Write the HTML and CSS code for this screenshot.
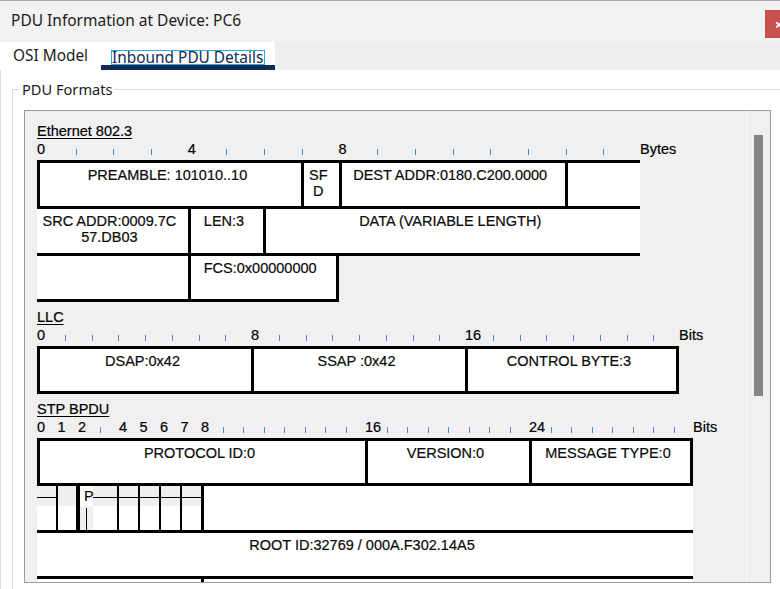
FILE: index.html
```html
<!DOCTYPE html>
<html>
<head>
<meta charset="utf-8">
<title>PDU Information at Device: PC6</title>
<link rel="stylesheet" href="styles.css">
</head>
<body>
<div class="dialog">
  <div class="titlebar">
    <div class="title">PDU Information at Device: PC6</div>
    <div class="close">×</div>
  </div>
  <div class="tabbar">
    <div class="tabs">
      <div class="tab">OSI Model</div>
      <div class="tab active"><span class="focus">Inbound PDU Details</span></div>
    </div>
  </div>
  <div class="content">
    <fieldset class="group">
      <legend>PDU Formats</legend>
      <div class="scroll">
        <div class="canvas">

          <section class="pdu eth">
            <div class="pdu-title">Ethernet 802.3</div>
            <div class="ruler">
              <span class="u"><b>0</b></span><span class="u"><i></i></span><span class="u"><i></i></span><span class="u"><i></i></span>
              <span class="u"><b>4</b></span><span class="u"><i></i></span><span class="u"><i></i></span><span class="u"><i></i></span>
              <span class="u"><b>8</b></span><span class="u"><i></i></span><span class="u"><i></i></span><span class="u"><i></i></span>
              <span class="u"><i></i></span><span class="u"><i></i></span><span class="u"><i></i></span><span class="u"><i></i></span>
              <span class="unit">Bytes</span>
            </div>
            <div class="row w16 top h43">
              <div class="c s7 bl">PREAMBLE: 101010..10</div>
              <div class="c s1 bl">SF<br>D</div>
              <div class="c s6 bl">DEST ADDR:0180.C200.0000</div>
              <div class="c s2 bl"></div>
            </div>
            <div class="row w16 top bottom h44">
              <div class="c s4">SRC ADDR:0009.7C<br>57.DB03</div>
              <div class="c s2 bl">LEN:3</div>
              <div class="c s10 bl">DATA (VARIABLE LENGTH)</div>
            </div>
            <div class="row w8 bottom h43">
              <div class="c s4"></div>
              <div class="c s4 bl br">FCS:0x00000000</div>
            </div>
          </section>

          <section class="pdu llc">
            <div class="pdu-title">LLC</div>
            <div class="ruler">
              <span class="u"><b>0</b></span><span class="u"><i></i></span><span class="u"><i></i></span><span class="u"><i></i></span><span class="u"><i></i></span><span class="u"><i></i></span><span class="u"><i></i></span><span class="u"><i></i></span>
              <span class="u"><b>8</b></span><span class="u"><i></i></span><span class="u"><i></i></span><span class="u"><i></i></span><span class="u"><i></i></span><span class="u"><i></i></span><span class="u"><i></i></span><span class="u"><i></i></span>
              <span class="u"><b>16</b></span><span class="u"><i></i></span><span class="u"><i></i></span><span class="u"><i></i></span><span class="u"><i></i></span><span class="u"><i></i></span><span class="u"><i></i></span><span class="u"><i></i></span>
              <span class="unit">Bits</span>
            </div>
            <div class="row w24 top bottom h42">
              <div class="c s8 bl">DSAP:0x42</div>
              <div class="c s8 bl">SSAP :0x42</div>
              <div class="c s8 bl br">CONTROL BYTE:3</div>
            </div>
          </section>

          <section class="pdu stp">
            <div class="pdu-title">STP BPDU</div>
            <div class="ruler">
              <span class="u"><b>0</b></span><span class="u"><b>1</b></span><span class="u"><b>2</b></span><span class="u"><i></i></span>
              <span class="u"><b>4</b></span><span class="u"><b>5</b></span><span class="u"><b>6</b></span><span class="u"><b>7</b></span>
              <span class="u"><b>8</b></span><span class="u"><i></i></span><span class="u"><i></i></span><span class="u"><i></i></span><span class="u"><i></i></span><span class="u"><i></i></span><span class="u"><i></i></span><span class="u"><i></i></span>
              <span class="u"><b>16</b></span><span class="u"><i></i></span><span class="u"><i></i></span><span class="u"><i></i></span><span class="u"><i></i></span><span class="u"><i></i></span><span class="u"><i></i></span><span class="u"><i></i></span>
              <span class="u"><b>24</b></span><span class="u"><i></i></span><span class="u"><i></i></span><span class="u"><i></i></span><span class="u"><i></i></span><span class="u"><i></i></span><span class="u"><i></i></span><span class="u"><i></i></span>
              <span class="unit">Bits</span>
            </div>
            <div class="row w32 top h42">
              <div class="c s16 bl">PROTOCOL ID:0</div>
              <div class="c s8 bl">VERSION:0</div>
              <div class="c s8 bl br">MESSAGE TYPE:0</div>
            </div>
            <div class="row w32 top h44">
              <div class="flags">
                <span class="fl-h fl-h1"></span>
                <span class="fl-h fl-h2"></span>
                <span class="fl-v fl-v1"></span>
                <span class="fl-v fl-v2"></span>
                <span class="fl-pcol"></span>
                <span class="fl-p">P</span>
                <span class="fl-pline"></span>
                <span class="fl-v fl-v4"></span>
                <span class="fl-v fl-v5"></span>
                <span class="fl-v fl-v6"></span>
                <span class="fl-v fl-v7"></span>
              </div>
              <div class="c s24 bl"></div>
            </div>
            <div class="row w32 top bottom h43">
              <div class="c s32">ROOT ID:32769 / 000A.F302.14A5</div>
            </div>
            <div class="row w32 h43">
              <div class="c s8"></div>
              <div class="c s24 bl"></div>
            </div>
          </section>

        </div>
        <div class="vscroll"><div class="thumb"></div></div>
      </div>
    </fieldset>
  </div>
</div>
</body>
</html>
```
FILE: styles.css
```css
* { box-sizing: border-box; }
html, body { margin: 0; padding: 0; }
body {
  width: 780px;
  height: 589px;
  overflow: hidden;
  background: #ffffff;
  font-family: "Noto Sans", "Open Sans", sans-serif;
  color: #1b1b1b;
}
.dialog { height: 589px; display: flex; flex-direction: column; }

/* title bar */
.titlebar {
  height: 42px;
  flex: none;
  background: #f2f2f2;
  border-top: 1px solid #a9a9a9;
  display: flex;
  justify-content: space-between;
  align-items: flex-start;
}
.title { font-size: 15.5px; line-height: 20px; padding: 9px 0 0 11px; white-space: nowrap; }
.close {
  flex: none;
  width: 28px;
  height: 28px;
  margin: 9px -13px 0 0;
  background: #c75050;
  color: #ffffff;
  font-size: 15px;
  font-weight: bold;
  line-height: 28px;
  text-align: center;
}

/* tabs */
.tabbar { height: 28px; flex: none; background: #eeeeee; display: flex; }
.tabs { display: flex; background: #ffffff; flex: none; width: 275px; }
.tab {
  flex: none;
  white-space: nowrap;
  font-size: 15.4px;
  line-height: 20px;
  padding: 4px 13px 0 13px;
  color: #1b1b1b;
}
.tab.active {
  flex: 1;
  padding: 6px 0 0 10px;
  border-bottom: 5px solid #0d2a52;
  color: #0d2a52;
}
.focus { display: inline-block; height: 15px; line-height: 13px; border: 1px solid #2aa8e0; padding: 0 1px 0 0; }

/* group box */
.content { flex: 1; overflow: hidden; box-shadow: inset 1px 0 #dddddd; }
.group {
  margin: 10px 0 0 12px;
  width: 800px;
  height: 560px;
  border: 1px solid #dcdcdc;
  padding: 12px 0 0 11px;
  min-width: 0;
}
.group legend {
  font-size: 14.6px;
  line-height: 18px;
  margin-left: -4px;
  padding: 0 2px;
  color: #1b1b1b;
}

/* scroll panel */
.scroll {
  width: 747px;
  height: 473px;
  border: 1px solid #9c9c9c;
  background: #f0f0f0;
  display: flex;
  overflow: hidden;
}
.canvas {
  flex: 1;
  padding: 12px 0 0 12px;
  overflow: hidden;
  font-family: "Liberation Sans", Arial, sans-serif;
  font-size: 14.5px;
  color: #000;
  -webkit-text-stroke: 0.2px currentColor;
}
.vscroll { width: 24px; flex: none; border-left: 1px solid #fafafa; padding: 24px 0 0 7px; }
.thumb { width: 9px; height: 261px; background: #858585; }

/* PDU diagrams */
.eth { --u: 37.7px; }
.llc { --u: 26.75px; margin-top: 7px; }
.stp { --u: 20.5px; margin-top: 7px; }

.pdu-title { line-height: 16px; height: 18px; text-decoration: underline; text-underline-offset: 2px; }
.ruler { display: flex; height: 19px; line-height: 16px; }
.u { flex: none; width: var(--u); }
.u b { font-weight: normal; white-space: nowrap; }
.u i { display: block; width: 1px; height: 6px; margin: 8px 0 0 1px; background: #4b8ad0; }
.unit { white-space: nowrap; }

.row { display: flex; }
.top { border-top: 3px solid #000; }
.bottom { border-bottom: 3px solid #000; }
.w8 { width: calc(var(--u) * 8); }
.w16 { width: calc(var(--u) * 16); }
.w24 { width: calc(var(--u) * 24); }
.w32 { width: calc(var(--u) * 32); }
.h42 > * { height: 42px; }
.h43 > * { height: 43px; }
.h44 > * { height: 44px; }

.c {
  background: #ffffff;
  text-align: center;
  padding: 4px 6px 0 0;
  line-height: 16px;
  color: #0a0a0a;
  white-space: nowrap;
}
.bl { border-left: 3px solid #000; }
.br { border-right: 3px solid #000; }
.s1 { flex: 0 0 var(--u); }
.s2 { flex: 0 0 calc(var(--u) * 2); }
.s4 { flex: 0 0 calc(var(--u) * 4); }
.s6 { flex: 0 0 calc(var(--u) * 6); }
.s7 { flex: 0 0 calc(var(--u) * 7); }
.s8 { flex: 0 0 calc(var(--u) * 8); }
.s10 { flex: 0 0 calc(var(--u) * 10); }
.s16 { flex: 0 0 calc(var(--u) * 16); }
.s24 { flex: 0 0 calc(var(--u) * 24); }
.s32 { flex: 0 0 calc(var(--u) * 32); }

/* STP flags field (free-drawn diagram lines) */
.flags {
  flex: 0 0 calc(var(--u) * 8);
  position: relative;
  background: linear-gradient(#efefef 0 20px, #ffffff 20px 44px);
}
.fl-h { position: absolute; top: 11px; height: 1px; background: #000; }
.fl-h1 { left: 0; width: 20px; }
.fl-h2 { left: 56px; width: 108px; }
.fl-v { position: absolute; top: 0; bottom: 0; width: 2px; background: #000; }
.fl-v1 { left: 19px; }
.fl-v2 { left: 39px; width: 4px; }
.fl-v4 { left: 80px; }
.fl-v5 { left: 101px; }
.fl-v6 { left: 122px; }
.fl-v7 { left: 143px; }
.fl-pcol { position: absolute; left: 43px; top: 20px; width: 13px; height: 24px; background: #efefef; }
.fl-p {
  position: absolute;
  left: 43px;
  top: 0;
  width: 13px;
  height: 20px;
  background: #ffffff;
  padding: 2px 0 0 4px;
  line-height: 16px;
  color: #0a0a0a;
}
.fl-pline { position: absolute; left: 49px; top: 22px; width: 1px; height: 22px; background: #000; }
```
